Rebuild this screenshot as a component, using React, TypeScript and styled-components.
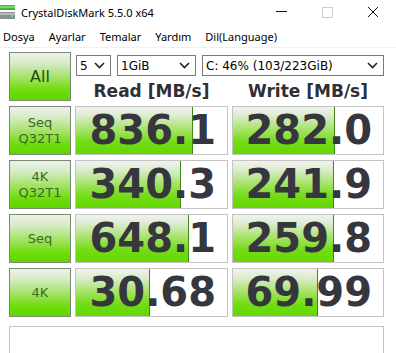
import React from 'react';
import styled, { createGlobalStyle } from 'styled-components';

const GlobalStyle = createGlobalStyle`
    html, body {
        margin: 0;
        padding: 0;
        background: #ffffff;
    }
    #root {
        width: 396px;
        height: 353px;
        overflow: hidden;
    }
`;

const Window = styled.div`
    display: flex;
    flex-direction: column;
    width: 396px;
    height: 353px;
    overflow: hidden;
    background: #ffffff;
    font-family: 'Segoe UI', 'Noto Sans', sans-serif;
    color: #000;
`;

const TitleBar = styled.div`
    flex: none;
    display: flex;
    align-items: center;
    height: 24px;
`;

const AppIcon = styled.svg`
    flex: none;
`;

const Title = styled.span`
    margin-left: 4px;
    font-size: 11px;
    flex: 1;
`;

const Control = styled.div`
    width: 46px;
    height: 24px;
    display: flex;
    align-items: center;
    justify-content: center;
`;

const MenuBar = styled.div`
    flex: none;
    display: flex;
    align-items: center;
    gap: 14px;
    height: 23px;
    padding: 1px 0 0 3px;
    box-sizing: border-box;
    border-bottom: 1px solid #f0f0f0;
    font-size: 11px;
    height: 24px;
`;

const MenuItem = styled.span``;

const Main = styled.div`
    flex: none;
    display: grid;
    grid-template-columns: 62px 153px 152px;
    grid-auto-rows: 49px;
    column-gap: 4px;
    row-gap: 5px;
    padding: 4px 0 0 9px;
`;

const LabelButton = styled.div<{ $big?: boolean }>`
    box-sizing: border-box;
    display: flex;
    align-items: center;
    justify-content: center;
    text-align: center;
    border: 1px solid #7b8a72;
    background: linear-gradient(to bottom, #eef1ec 0%, #d6ebc6 22%, #9fe25c 55%, #6cdc0a 80%, #62d600 100%);
    font-family: Tahoma, 'DejaVu Sans', sans-serif;
    font-size: ${p => (p.$big ? '16px' : '13px')};
    line-height: ${p => (p.$big ? '18px' : '16px')};
    color: ${p => (p.$big ? '#1f4f08' : '#3a6a22')};
`;

const TopPanel = styled.div`
    grid-column: 2 / 4;
    display: flex;
    flex-direction: column;
`;

const Selects = styled.div`
    display: flex;
    gap: 6px;
    margin: 3px 0 0 1px;
    height: 21px;
`;

const SelectBox = styled.div<{ $w: number }>`
    box-sizing: border-box;
    width: ${p => p.$w}px;
    height: 21px;
    border: 1px solid #7a7a7a;
    display: flex;
    align-items: center;
    justify-content: space-between;
    padding: 0 5px 0 3px;
    font-family: Tahoma, 'DejaVu Sans', sans-serif;
    font-size: 12px;
    color: #000;
    background: #fff;
`;

const Headers = styled.div`
    display: grid;
    grid-template-columns: 153px 152px;
    column-gap: 4px;
    flex: 1;
`;

const Header = styled.div`
    display: flex;
    align-items: center;
    justify-content: center;
    padding-top: 4px;
    font-family: Verdana, 'DejaVu Sans', sans-serif;
    font-weight: bold;
    font-size: 17px;
    color: #2f2f35;
`;

const ValueCell = styled.div`
    box-sizing: border-box;
    position: relative;
    overflow: hidden;
    border: 1px solid #c3c3c3;
    background: #ffffff;
`;

const Fill = styled.div`
    position: absolute;
    left: 0;
    top: 0;
    bottom: 0;
    border-right: 1px solid #3f8a12;
    background: linear-gradient(to bottom, #f1f3f0 0%, #dcecd0 18%, #a3e262 50%, #72dc14 75%, #64d700 100%);
`;

const Value = styled.div`
    position: relative;
    text-align: right;
    padding-right: 11px;
    font-family: Verdana, 'DejaVu Sans', sans-serif;
    font-weight: bold;
    font-size: 40px;
    line-height: 47px;
    color: #36363e;
`;

const Comment = styled.div`
    grid-column: 1 / 4;
    box-sizing: border-box;
    margin-top: 4px;
    height: 40px;
    border: 1px solid #c3c3c3;
    background: #fff;
`;

const Chevron = () => (
    <svg width="11" height="7" viewBox="0 0 11 7">
        <path d="M1 1 L5.5 5.5 L10 1" fill="none" stroke="#222" strokeWidth="1.6" />
    </svg>
);

const rows = [
    { label: ['Seq', 'Q32T1'], read: '836.1', readPct: 76.5, write: '282.0', writePct: 67.5 },
    { label: ['4K', 'Q32T1'], read: '340.3', readPct: 68.6, write: '241.9', writePct: 66.9 },
    { label: ['Seq'], read: '648.1', readPct: 74.5, write: '259.8', writePct: 66.9 },
    { label: ['4K'], read: '30.68', readPct: 48.4, write: '69.99', writePct: 56.3 },
];

const App = () => {
    return (
        <Window>
            <GlobalStyle />
            <TitleBar>
                <AppIcon width="17" height="14" viewBox="0 0 17 14">
                    <rect x="0" y="0" width="15" height="5" fill="#3fb83a" />
                    <rect x="0" y="1" width="15" height="2" fill="#6fd86a" />
                    <rect x="0" y="7" width="15" height="7" fill="#8a8f94" />
                    <rect x="0" y="8" width="15" height="2" fill="#b7bbbf" />
                    <rect x="11" y="10" width="2" height="2" fill="#54ee54" />
                </AppIcon>
                <Title>CrystalDiskMark 5.5.0 x64</Title>
                <Control>
                    <svg width="11" height="2" viewBox="0 0 11 2">
                        <rect width="11" height="1" fill="#111" />
                    </svg>
                </Control>
                <Control>
                    <svg width="11" height="11" viewBox="0 0 11 11">
                        <rect x="0.5" y="0.5" width="10" height="10" fill="none" stroke="#cfcfcf" />
                    </svg>
                </Control>
                <Control>
                    <svg width="12" height="12" viewBox="0 0 12 12">
                        <path d="M1 1 L11 11 M11 1 L1 11" stroke="#111" strokeWidth="1" />
                    </svg>
                </Control>
            </TitleBar>
            <MenuBar>
                <MenuItem>Dosya</MenuItem>
                <MenuItem>Ayarlar</MenuItem>
                <MenuItem>Temalar</MenuItem>
                <MenuItem>Yardım</MenuItem>
                <MenuItem>Dil(Language)</MenuItem>
            </MenuBar>
            <Main>
                <LabelButton $big>All</LabelButton>
                <TopPanel>
                    <Selects>
                        <SelectBox $w={35}>
                            <span>5</span>
                            <Chevron />
                        </SelectBox>
                        <SelectBox $w={79}>
                            <span>1GiB</span>
                            <Chevron />
                        </SelectBox>
                        <SelectBox $w={182}>
                            <span>C: 46% (103/223GiB)</span>
                            <Chevron />
                        </SelectBox>
                    </Selects>
                    <Headers>
                        <Header>Read [MB/s]</Header>
                        <Header>Write [MB/s]</Header>
                    </Headers>
                </TopPanel>
                {rows.map(row => (
                    <React.Fragment key={row.label.join('-')}>
                        <LabelButton>
                            <div>
                                {row.label.map(line => (
                                    <div key={line}>{line}</div>
                                ))}
                            </div>
                        </LabelButton>
                        <ValueCell>
                            <Fill style={{ width: `${row.readPct}%` }} />
                            <Value>{row.read}</Value>
                        </ValueCell>
                        <ValueCell>
                            <Fill style={{ width: `${row.writePct}%` }} />
                            <Value>{row.write}</Value>
                        </ValueCell>
                    </React.Fragment>
                ))}
                <Comment />
            </Main>
        </Window>
    );
};

export default App;
